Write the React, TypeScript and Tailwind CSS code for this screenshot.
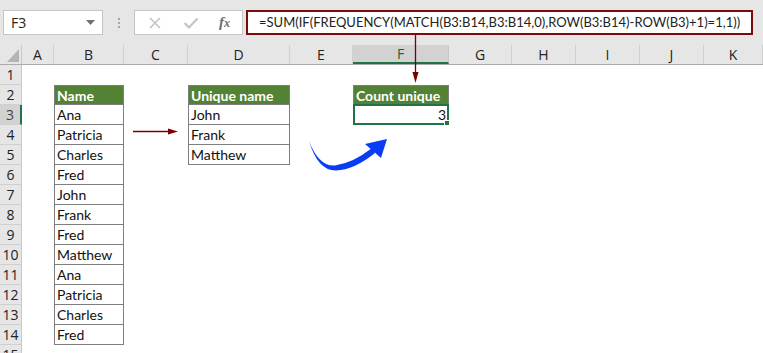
import React from 'react';

const COLS = [
  { id: 'A', w: 'w-[32px]' },
  { id: 'B', w: 'w-[70px]' },
  { id: 'C', w: 'w-[64px]' },
  { id: 'D', w: 'w-[102px]' },
  { id: 'E', w: 'w-[63px]' },
  { id: 'F', w: 'w-[96px]' },
  { id: 'G', w: 'w-[63px]' },
  { id: 'H', w: 'w-[64px]' },
  { id: 'I', w: 'w-[64px]' },
  { id: 'J', w: 'w-[64px]' },
  { id: 'K', w: 'w-[59px]' },
];

const names = ['Ana', 'Patricia', 'Charles', 'Fred', 'John', 'Frank', 'Fred', 'Matthew', 'Ana', 'Patricia', 'Charles', 'Fred'];
const unique = ['John', 'Frank', 'Matthew'];

const cellFont = "font-['Lato','Liberation_Sans',sans-serif] text-[14px]";

const Toolbar = () => (
  <div className="h-[45px] bg-[#e6e6e6] flex items-start pt-[10px] pl-[3px]">
    {/* Name box */}
    <div className="w-[100px] h-[25px] bg-white border border-[#c6c6c6] flex items-center justify-between pl-[7px] pr-[7px]">
      <span className="text-[14px] text-[#222] font-['Open_Sans',sans-serif]">F3</span>
      <svg width="9" height="5" viewBox="0 0 9 5">
        <path d="M0 0 L9 0 L4.5 5 Z" fill="#6f6f6f" />
      </svg>
    </div>
    {/* dots */}
    <div className="w-[31px] h-[25px] flex flex-col items-center justify-center gap-[2px]">
      <span className="w-[2px] h-[2px] bg-[#a6a6a6]" />
      <span className="w-[2px] h-[2px] bg-[#a6a6a6]" />
      <span className="w-[2px] h-[2px] bg-[#a6a6a6]" />
    </div>
    {/* fx box */}
    <div className="w-[109px] h-[25px] bg-white border border-[#c6c6c6] flex items-center">
      <svg width="14" height="14" viewBox="0 0 14 14" className="ml-[13px]">
        <path d="M2 2 L12 12 M12 2 L2 12" stroke="#c4c4c4" strokeWidth="1.6" />
      </svg>
      <svg width="16" height="14" viewBox="0 0 16 14" className="ml-[21px]">
        <path d="M1.5 7 L6 11.5 L14.5 2.5" stroke="#c4c4c4" strokeWidth="2.2" fill="none" />
      </svg>
      <span className="ml-[20px] text-[15px] italic font-bold text-[#6d6d6d] font-['Liberation_Serif',serif] leading-none">
        f<span className="text-[12px]">x</span>
      </span>
    </div>
    {/* formula */}
    <div className="ml-[3px] w-[507px] h-[25px] border-2 border-[#7b0a0a] bg-white flex items-center pl-[11px] overflow-hidden">
      <span className="text-[13px] text-[#222] font-['Lato','Liberation_Sans',sans-serif] whitespace-nowrap">
        =SUM(IF(FREQUENCY(MATCH(B3:B14,B3:B14,0),ROW(B3:B14)-ROW(B3)+1)=1,1))
      </span>
    </div>
  </div>
);

const HeaderRow = () => (
  <div className="flex h-[20px] bg-[#e6e6e6] border-b border-[#ababab]">
    <div className="w-[22px] h-full border-r border-[#c8c8c8] relative">
      <svg width="12" height="13" viewBox="0 0 12 13" className="absolute left-[7px] top-[4px]">
        <path d="M12 0 L12 13 L0 13 Z" fill="#b4b4b4" />
      </svg>
    </div>
    {COLS.map((c) => (
      <div
        key={c.id}
        className={`${c.w} h-full flex items-center justify-center text-[14px] font-['Open_Sans',sans-serif] ${
          c.id === 'F'
            ? 'bg-[#d2d2d2] border-b-2 border-b-[#217346] text-[#1e5e38] border-r border-r-[#c8c8c8]'
            : 'text-[#222] border-r border-[#d0d0d0]'
        }`}
      >
        {c.id}
      </div>
    ))}
  </div>
);

type CellProps = { children?: React.ReactNode; head?: boolean; top?: boolean };

const TableCell = ({ children, head, top }: CellProps) => (
  <div
    className={`h-full flex items-center pl-[2px] border-x border-b border-[#7f7f7f] ${top ? 'border-t' : ''} ${
      head ? 'bg-[#548235] text-white font-bold' : 'bg-white text-[#111]'
    } ${cellFont} whitespace-nowrap overflow-hidden`}
  >
    {children}
  </div>
);

const Row = ({ n }: { n: number }) => {
  const idx = n - 3;
  const cell = (id: string) => {
    if (id === 'B') {
      if (n === 2) return <TableCell head top>Name</TableCell>;
      if (n >= 3 && n <= 14) return <TableCell>{names[idx]}</TableCell>;
    }
    if (id === 'D') {
      if (n === 2) return <TableCell head top>Unique name</TableCell>;
      if (n >= 3 && n <= 5) return <TableCell>{unique[idx]}</TableCell>;
    }
    if (id === 'F') {
      if (n === 2) return <TableCell head top>Count unique</TableCell>;
      if (n === 3)
        return (
          <div className="relative border-2 border-[#217346] -mt-[1px] h-[21px] flex items-center justify-end pr-[1px] bg-white">
            <span className={`${cellFont} text-[#111]`}>3</span>
            <span className="absolute -right-[3px] -bottom-[3px] w-[6px] h-[6px] bg-[#217346] border border-white" />
          </div>
        );
    }
    return null;
  };
  const sel = n === 3;
  return (
    <div className="flex h-[20px]">
      <div
        className={`w-[22px] h-full flex items-center justify-center text-[14px] font-['Open_Sans',sans-serif] border-b border-[#d0d0d0] ${
          sel ? 'bg-[#d2d2d2] border-r-2 border-r-[#217346] text-[#444]' : 'bg-[#e6e6e6] border-r border-r-[#c8c8c8] text-[#222]'
        }`}
      >
        {n}
      </div>
      {COLS.map((c) => (
        <div key={c.id} className={`${c.w} h-full`}>
          {cell(c.id)}
        </div>
      ))}
    </div>
  );
};

const Overlay = () => (
  <svg className="absolute left-0 top-0 pointer-events-none" width="763" height="353" viewBox="0 0 763 353">
    {/* formula arrow */}
    <line x1="415.5" y1="35" x2="415.5" y2="76" stroke="#7b0000" strokeWidth="1.3" />
    <path d="M412.5 72 L418.5 72 L415.5 83 Z" fill="#7b0000" />
    {/* B -> D arrow */}
    <line x1="133" y1="131.5" x2="172" y2="131.5" stroke="#7b0000" strokeWidth="1.3" />
    <path d="M168 128.5 L168 134.5 L178 131.5 Z" fill="#7b0000" />
    {/* blue curved arrow */}
    <path
      d="M309 141 Q318 171 336 170.5 Q354 170 375 153 L372 148 Q353 163 335 165.5 Q319 167 309 141 Z"
      fill="#0a3cf5"
    />
    <path d="M387 139 L365 144 L381 158 Z" fill="#0a3cf5" />
  </svg>
);

export default function App() {
  const rows = Array.from({ length: 15 }, (_, i) => i + 1);
  return (
    <div className="relative w-[763px] h-[353px] overflow-hidden bg-white">
      <Toolbar />
      <HeaderRow />
      {rows.map((n) => (
        <Row key={n} n={n} />
      ))}
      <Overlay />
    </div>
  );
}
